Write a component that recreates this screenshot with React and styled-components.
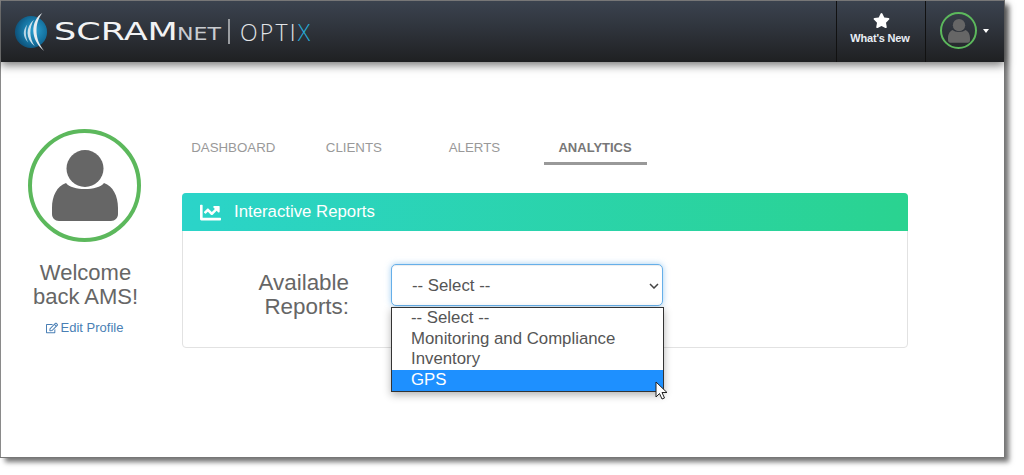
import React from "react";
import styled, { createGlobalStyle } from "styled-components";
import { FaStar, FaChartLine, FaRegEdit } from "react-icons/fa";

const GlobalStyle = createGlobalStyle`
  html, body {
    margin: 0;
    padding: 0;
    background: #fff;
  }
  body {
    width: 1024px;
    height: 475px;
    overflow: hidden;
    font-family: "Liberation Sans", Arial, sans-serif;
  }
`;

const Window = styled.div`
  width: 1004px;
  height: 457px;
  background: #fff;
  border-left: 1px solid #8a8a8a;
  box-sizing: border-box;
  box-shadow: 1px 0 0 #777, 0 1px 0 #777, 5px 5px 5px rgba(0, 0, 0, 0.55);
`;

const Header = styled.header`
  height: 62px;
  box-sizing: border-box;
  display: flex;
  align-items: stretch;
  justify-content: space-between;
  background: linear-gradient(#3b434f 0%, #2f343c 45%, #1f2022 100%);
  border-top: 1px solid #777;
  box-shadow: 0 3px 9px rgba(0, 0, 0, 0.55);
`;

const Brand = styled.div`
  display: flex;
  align-items: center;
  padding-left: 13px;
`;

const BrandName = styled.span`
  display: inline-block;
  width: 123px;
  margin-left: 6px;
  color: #f2f3f4;
  font-family: "DejaVu Sans", sans-serif;
  font-size: 24.5px;
  line-height: 24px;
  transform: scaleX(1.43);
  transform-origin: left center;
  white-space: nowrap;
`;

const BrandSuffix = styled.span`
  width: 45px;
  margin-top: 5px;
  color: #c9ccd0;
  font-family: "DejaVu Sans", sans-serif;
  font-size: 17px;
  line-height: 18px;
  transform: scaleX(1.3);
  transform-origin: left center;
  white-space: nowrap;
`;

const BrandDivider = styled.span`
  width: 2px;
  height: 25px;
  margin-left: 6px;
  background: #9a9da1;
`;

const ProductName = styled.span`
  margin-left: 10px;
  color: #e3e5e8;
  font-family: "Open Sans", sans-serif;
  font-weight: 300;
  font-size: 23px;
  line-height: 26px;
  letter-spacing: 2.2px;

  em {
    font-style: normal;
    color: #27a9d6;
  }
`;

const HeaderActions = styled.div`
  display: flex;
`;

const WhatsNew = styled.div`
  width: 90px;
  display: flex;
  flex-direction: column;
  align-items: center;
  padding-top: 11px;
  box-sizing: border-box;
  border-left: 1px solid #111;
  border-right: 1px solid #111;
  color: #fff;
  font-size: 11px;
  font-weight: 700;
  letter-spacing: -0.2px;

  span {
    margin-top: 3px;
    margin-right: 2px;
    color: #e8edf4;
  }
`;

const UserMenu = styled.div`
  width: 78px;
  display: flex;
  align-items: center;
  padding: 0 0 2px 14px;
  box-sizing: border-box;
`;

const Caret = styled.span`
  width: 0;
  height: 0;
  margin-left: 6px;
  border-left: 3.5px solid transparent;
  border-right: 3.5px solid transparent;
  border-top: 4px solid #fff;
`;

const AvatarRing = styled.div`
  width: ${({ size }) => size}px;
  height: ${({ size }) => size}px;
  flex: none;
  box-sizing: border-box;
  border-radius: 50%;
  border: ${({ ring }) => ring}px solid #5cb85c;
  display: flex;
  align-items: center;
  justify-content: center;
`;

const Main = styled.main`
  display: flex;
`;

const Sidebar = styled.aside`
  width: 167px;
  flex: none;
  box-sizing: border-box;
  padding: 67px 0 0 0;
  display: flex;
  flex-direction: column;
  align-items: center;
  color: #666;
`;

const Welcome = styled.div`
  margin-top: 19px;
  width: 120px;
  padding-left: 2px;
  text-align: center;
  font-size: 22px;
  line-height: 24px;
`;

const EditLink = styled.a`
  margin-top: 10px;
  display: flex;
  align-items: center;
  gap: 3px;
  color: #4a7fb5;
  font-size: 13px;
  line-height: 18px;
`;

const Content = styled.div`
  flex: 1;
  padding-top: 72px;
`;

const Tabs = styled.nav`
  display: flex;
  margin-left: 5px;
`;

const Tab = styled.div`
  width: 120.6px;
  height: 31px;
  display: flex;
  justify-content: center;
  font-size: ${({ active }) => (active ? "13px" : "13.3px")};
  line-height: 28px;
  color: ${({ active }) => (active ? "#777" : "#999")};
  font-weight: ${({ active }) => (active ? 700 : 400)};

  span {
    width: 103px;
    height: 31px;
    box-sizing: border-box;
    text-align: center;
    border-bottom: ${({ active }) => (active ? "3px solid #999" : "none")};
  }
`;

const Panel = styled.section`
  width: 726px;
  height: 155px;
  margin: 28px 0 0 14px;
  box-sizing: border-box;
  border: 1px solid #e2e2e2;
  border-radius: 4px;
`;

const PanelHeader = styled.div`
  height: 38px;
  margin: -1px -1px 0;
  display: flex;
  align-items: center;
  gap: 13px;
  padding-left: 18px;
  border-radius: 4px 4px 0 0;
  background: linear-gradient(90deg, #2bd4c9, #2ad390);
  color: #fff;
  font-size: 16.8px;
`;

const FormRow = styled.div`
  display: flex;
  align-items: flex-start;
  padding-top: 33px;
`;

const FieldLabel = styled.label`
  width: 166px;
  flex: none;
  margin-top: 7px;
  text-align: right;
  color: #666;
  font-size: 22.4px;
  line-height: 24px;
`;

const SelectWrap = styled.div`
  position: relative;
  width: 273px;
  margin-left: 42px;
`;

const Select = styled.select`
  width: 272px;
  height: 42px;
  box-sizing: border-box;
  padding-left: 20px;
  appearance: none;
  background: #fff;
  border: 1px solid #66afe9;
  border-radius: 5px;
  box-shadow: inset 0 1px 1px rgba(0, 0, 0, 0.075), 0 0 6px rgba(102, 175, 233, 0.6);
  color: #555;
  font-family: inherit;
  font-size: 16.8px;
  outline: none;
`;

const Chevron = styled.svg`
  position: absolute;
  left: 258px;
  top: 19px;
  pointer-events: none;
`;

const Dropdown = styled.ul`
  position: absolute;
  top: 43px;
  left: 0;
  width: 273px;
  margin: 0;
  padding: 0;
  box-sizing: border-box;
  list-style: none;
  background: #fff;
  border: 1px solid #333;
  box-shadow: 0 3px 8px rgba(0, 0, 0, 0.3);
`;

const Option = styled.li`
  height: 20.7px;
  padding-left: 19px;
  font-size: 16.8px;
  line-height: 19px;
  color: ${({ selected }) => (selected ? "#fff" : "#555")};
  background: ${({ selected }) => (selected ? "#1e90ff" : "transparent")};
`;

const Pointer = styled.svg`
  position: absolute;
  left: 264px;
  top: 117px;
`;

const Globe = () => (
  <svg width="34" height="42" viewBox="0 0 36 42">
    <defs>
      <radialGradient id="globe" cx="0.6" cy="0.45" r="0.65">
        <stop offset="0" stopColor="#2a9fd0" />
        <stop offset="0.6" stopColor="#14719f" />
        <stop offset="1" stopColor="#0d4a70" />
      </radialGradient>
    </defs>
    <circle cx="18" cy="21" r="17" fill="url(#globe)" />
    <path d="M30 1C17 9 17 30 32 41C22 30 21 12 30 1Z" fill="#e6ecf0" />
    <path d="M21 8C12 16 12 28 22 36C16 27 16 17 21 8Z" fill="#cfe2ec" />
    <path d="M14 13C9 19 9 26 15 32C12 26 12 19 14 13Z" fill="#b6d4e4" />
  </svg>
);

const Person = ({ size }) => (
  <svg width={size} height={size} viewBox="0 0 66 72" fill="#666">
    <circle cx="33" cy="18.5" r="18.5" />
    <path d="M14 33C20 41 46 41 52 33C61 36 66 46 66 58V64C66 68 63 71 59 71H7C3 71 0 68 0 64V58C0 46 5 36 14 33Z" />
  </svg>
);

const options = ["-- Select --", "Monitoring and Compliance", "Inventory", "GPS"];
const tabs = ["DASHBOARD", "CLIENTS", "ALERTS", "ANALYTICS"];

const App = () => (
  <>
    <GlobalStyle />
    <Window>
      <Header>
        <Brand>
          <Globe />
          <BrandName>SCRAM</BrandName>
          <BrandSuffix>NET</BrandSuffix>
          <BrandDivider />
          <ProductName>
            OPTI<em>X</em>
          </ProductName>
        </Brand>
        <HeaderActions>
          <WhatsNew>
            <FaStar size={17} />
            <span>What's New</span>
          </WhatsNew>
          <UserMenu>
            <AvatarRing size={37} ring={2}>
              <Person size={24} />
            </AvatarRing>
            <Caret />
          </UserMenu>
        </HeaderActions>
      </Header>
      <Main>
        <Sidebar>
          <AvatarRing size={113} ring={4}>
            <Person size={72} />
          </AvatarRing>
          <Welcome>Welcome back AMS!</Welcome>
          <EditLink>
            <FaRegEdit size={12} />
            Edit Profile
          </EditLink>
        </Sidebar>
        <Content>
          <Tabs>
            {tabs.map((tab) => (
              <Tab key={tab} active={tab === "ANALYTICS"}>
                <span>{tab}</span>
              </Tab>
            ))}
          </Tabs>
          <Panel>
            <PanelHeader>
              <FaChartLine size={21} />
              Interactive Reports
            </PanelHeader>
            <FormRow>
              <FieldLabel>
                Available
                <br />
                Reports:
              </FieldLabel>
              <SelectWrap>
                <Select defaultValue="-- Select --">
                  {options.map((option) => (
                    <option key={option}>{option}</option>
                  ))}
                </Select>
                <Chevron width="10" height="6" viewBox="0 0 10 6">
                  <path d="M1 1L5 5L9 1" fill="none" stroke="#444" strokeWidth="1.5" />
                </Chevron>
                <Dropdown>
                  {options.map((option) => (
                    <Option key={option} selected={option === "GPS"}>
                      {option}
                    </Option>
                  ))}
                </Dropdown>
                <Pointer width="14" height="20" viewBox="0 0 14 20">
                  <path d="M1 1V16L4.5 12.5L7 18L9.5 17L7 11.5H12Z" fill="#fff" stroke="#222" strokeWidth="1" />
                </Pointer>
              </SelectWrap>
            </FormRow>
          </Panel>
        </Content>
      </Main>
    </Window>
  </>
);

export default App;
